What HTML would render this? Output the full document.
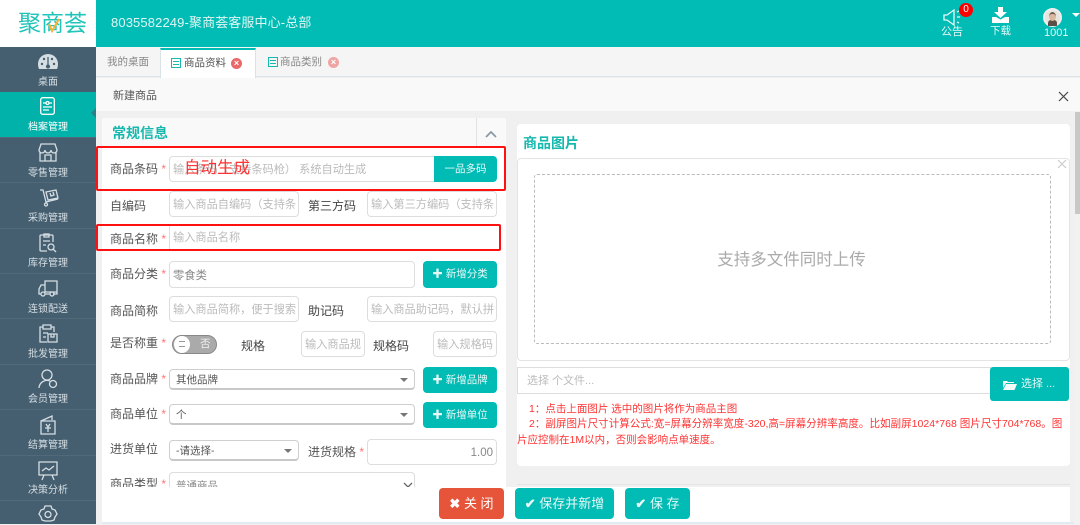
<!DOCTYPE html>
<html><head><meta charset="utf-8">
<style>
*{box-sizing:border-box;margin:0;padding:0}
html,body{width:1080px;height:524px;overflow:hidden;background:#f0f0f0;font-family:"Liberation Sans","Noto Sans CJK SC",sans-serif;font-size:11px;color:#555}
.a{position:absolute;white-space:nowrap}
.top{left:96px;top:0;width:984px;height:47px;background:#00bcb4}
.navt{left:0;width:96px;text-align:center;color:#d5dee3;font-size:10px;line-height:12px}
.lab{font-size:12px;color:#555;line-height:14px}
.s{color:#f77}
.inp{background:#fff;border:1px solid #ddd;border-radius:4px;color:#bbb;font-size:11.2px;line-height:27px;padding-left:3px;overflow:hidden}
.sel{background:#fff;border:1px solid #cfcfcf;border-bottom:2px solid #c8c8c8;border-radius:4px;color:#555;font-size:10.5px;line-height:20px;padding-left:6px}
.sel i{position:absolute;right:6px;top:8px;border:4px solid transparent;border-top:4px solid #777;border-bottom:0}
.btn{background:#00bcb4;border-radius:4px;font-size:11px;text-align:center;color:#e8f8f7}
.tic{width:10px;height:10px;border:1px solid #17b9ae;background:linear-gradient(#17b9ae,#17b9ae) 1px 2px/6px 1px no-repeat,linear-gradient(#17b9ae,#17b9ae) 1px 5px/6px 1px no-repeat}
svg{position:absolute;overflow:visible;fill:none;stroke:#d5dee3;stroke-width:1.3}
</style></head><body>
<div class="a" style="left:0;top:0;width:96px;height:47px;background:#fff"></div>
<div class="a" style="left:18px;top:8px;font-size:23px;line-height:30px;color:#20c4b8;letter-spacing:0">聚商荟</div>
<svg style="left:47px;top:18px" width="16" height="15" viewBox="0 0 16 15"><path d="M2 6l3 7 7-12" stroke="#f8b23a" stroke-width="2"/></svg>
<div class="a top"></div>
<div class="a" style="left:111px;top:14px;font-size:13px;line-height:18px;color:#dff6f4;letter-spacing:.12px">8035582249-聚商荟客服中心-总部</div>

<svg style="left:943px;top:9px" width="18" height="17" viewBox="0 0 18 17"><path d="M1 6h3l7-5v15l-7-5H1z" stroke="#e8f8f7"/><path d="M14 3l2-1M14 8h3M14 13l2 1" stroke="#e8f8f7"/></svg>
<div class="a" style="left:959px;top:3px;width:14px;height:14px;background:#f00;border-radius:50%;color:#fff;font-size:10px;line-height:14px;text-align:center">0</div>
<div class="a" style="left:941px;top:26px;font-size:11px;line-height:13px;color:#e8f8f7">公告</div>
<svg style="left:992px;top:7px" width="17" height="16" viewBox="0 0 17 16"><path d="M6 0h5v5h4L8.500 11 2 5h4z" fill="#fff" stroke="none"/><path d="M0 10h4l4.500 2.500L13 10h4v6H0z" fill="#fff" stroke="none"/></svg>
<div class="a" style="left:990px;top:25px;font-size:10.5px;line-height:13px;color:#e8f8f7">下载</div>
<div class="a" style="left:1043px;top:8px;width:19px;height:19px;border-radius:50%;background:#e8e4e0;border:2px solid #eee"></div>
<div class="a" style="left:1048px;top:20px;width:9px;height:6px;border-radius:3px 3px 0 0;background:#5a5048"></div>
<div class="a" style="left:1049px;top:12px;width:7px;height:9px;border-radius:50%;background:#d9b8a0;border-top:2px solid #6b5a4c"></div>
<div class="a" style="left:1044px;top:27px;font-size:11px;line-height:13px;color:#e8f8f7">1001</div>
<div class="a" style="left:1072px;top:13px;border:4px solid transparent;border-top:4px solid #fff;border-bottom:0"></div>

<!-- tabs -->
<div class="a" style="left:96px;top:47px;width:984px;height:30px;background:#f5f5f5;border-bottom:1px solid #d9e3e6"></div>
<div class="a" style="left:107px;top:55px;color:#888;font-size:10.5px;line-height:14px">我的桌面</div>
<div class="a" style="left:160px;top:48px;width:96px;height:30px;background:#fff;border-top:2px solid #00bcb4;border-left:1px solid #d9e3e6;border-right:1px solid #d9e3e6"></div>
<div class="a tic" style="left:171px;top:58px"></div>
<div class="a" style="left:184px;top:56px;color:#555;font-size:10.5px;line-height:14px">商品资料</div>
<div class="a" style="left:231px;top:58px;width:11px;height:11px;border-radius:50%;background:#e9686a;color:#fff;font-size:9px;line-height:11px;text-align:center;font-weight:bold">×</div>
<div class="a tic" style="left:268px;top:57px"></div>
<div class="a" style="left:280px;top:55px;color:#888;font-size:10.5px;line-height:14px">商品类别</div>
<div class="a" style="left:328px;top:57px;width:11px;height:11px;border-radius:50%;background:#f0a5a5;color:#fff;font-size:9px;line-height:11px;text-align:center;font-weight:bold">×</div>

<!-- title bar -->
<div class="a" style="left:96px;top:78px;width:984px;height:33px;background:#f9f9f9"></div>
<div class="a" style="left:113px;top:89px;color:#555;line-height:14px">新建商品</div>
<svg style="left:1059px;top:92px" width="9" height="9" viewBox="0 0 9 9"><path d="M0 0l9 9M9 0L0 9" stroke="#444" stroke-width="1.2"/></svg>

<!-- left panel -->
<div class="a" style="left:102px;top:118px;width:404px;height:406px;background:#fff;border-radius:3px"></div>
<div class="a" style="left:102px;top:118px;width:404px;height:28px;background:#f9f9f9"></div>
<div class="a" style="left:476px;top:118px;width:1px;height:28px;background:#e2e2e2"></div>
<svg style="left:486px;top:131px" width="10" height="6" viewBox="0 0 10 6"><path d="M0 6l5-5 5 5" stroke="#8a98a3" stroke-width="1.7"/></svg>
<div class="a" style="left:112px;top:124px;font-size:14px;font-weight:bold;line-height:18px;color:#17b9ae">常规信息</div>

<div class="a lab" style="left:110px;top:162px">商品条码 <span class="s">*</span></div>
<div class="a inp" style="left:169px;top:156px;width:266px;height:26px;border-radius:4px 0 0 4px">输入条码（支持条码枪） 系统自动生成</div>
<div class="a btn" style="left:434px;top:156px;width:63px;height:26px;line-height:27px;border-radius:0 4px 4px 0;font-size:10.5px">一品多码</div>
<div class="a" style="left:184px;top:157px;font-size:16.5px;line-height:22px;color:#f33">自动生成</div>
<div class="a" style="left:96px;top:146px;width:410px;height:45px;border:2px solid #f11;border-radius:2px"></div>

<div class="a lab" style="left:110px;top:199px">自编码</div>
<div class="a inp" style="left:169px;top:191px;width:130px;height:26px">输入商品自编码（支持条</div>
<div class="a lab" style="left:308px;top:199px;color:#444">第三方码</div>
<div class="a inp" style="left:367px;top:191px;width:130px;height:26px">输入第三方编码（支持条</div>

<div class="a lab" style="left:110px;top:232px">商品名称 <span class="s">*</span></div>
<div class="a" style="left:169px;top:225px;width:1px;height:26px;background:#ddd"></div>
<div class="a" style="left:173px;top:231px;color:#bbb;font-size:11.2px;line-height:14px">输入商品名称</div>
<div class="a" style="left:96px;top:224px;width:405px;height:27px;border:2px solid #f11;border-radius:2px"></div>

<div class="a lab" style="left:110px;top:267px">商品分类 <span class="s">*</span></div>
<div class="a inp" style="left:169px;top:261px;width:246px;height:27px;color:#888;font-size:11.3px;line-height:28px;padding-top:0">零食类</div>
<div class="a btn" style="left:423px;top:261px;width:74px;height:27px;line-height:27px;font-size:10.5px"><b>✚</b> 新增分类</div>

<div class="a lab" style="left:110px;top:304px">商品简称</div>
<div class="a inp" style="left:169px;top:296px;width:130px;height:26px">输入商品简称，便于搜索</div>
<div class="a lab" style="left:308px;top:304px;color:#444">助记码</div>
<div class="a inp" style="left:367px;top:296px;width:130px;height:26px">输入商品助记码，默认拼</div>

<div class="a lab" style="left:110px;top:336px">是否称重 <span class="s">*</span></div>
<div class="a" style="left:172px;top:335px;width:45px;height:19px;border-radius:10px;background:#aaa;border:1px solid #888"></div>
<div class="a" style="left:174px;top:336px;width:16px;height:17px;border-radius:50%;background:#fff"></div>
<div class="a" style="left:179px;top:341px;width:6px;height:6px;border-top:1px solid #999;border-bottom:1px solid #999"></div>
<div class="a" style="left:200px;top:337px;font-size:10.5px;line-height:14px;color:#f0f0f0">否</div>
<div class="a lab" style="left:241px;top:339px;color:#444">规格</div>
<div class="a inp" style="left:301px;top:331px;width:64px;height:26px">输入商品规</div>
<div class="a lab" style="left:373px;top:339px;color:#444">规格码</div>
<div class="a inp" style="left:433px;top:331px;width:64px;height:26px">输入规格码</div>

<div class="a lab" style="left:110px;top:372px">商品品牌 <span class="s">*</span></div>
<div class="a sel" style="left:169px;top:369px;width:246px;height:21px">其他品牌<i></i></div>
<div class="a btn" style="left:423px;top:367px;width:74px;height:26px;line-height:26px;font-size:10.5px"><b>✚</b> 新增品牌</div>

<div class="a lab" style="left:110px;top:407px">商品单位 <span class="s">*</span></div>
<div class="a sel" style="left:169px;top:404px;width:246px;height:21px">个<i></i></div>
<div class="a btn" style="left:423px;top:402px;width:74px;height:26px;line-height:26px;font-size:10.5px"><b>✚</b> 新增单位</div>

<div class="a lab" style="left:110px;top:442px">进货单位</div>
<div class="a sel" style="left:169px;top:440px;width:130px;height:21px">-请选择-<i></i></div>
<div class="a lab" style="left:308px;top:445px">进货规格 <span class="s">*</span></div>
<div class="a inp" style="left:367px;top:439px;width:130px;height:26px;text-align:right;padding-right:3px;color:#888;font-size:11.5px">1.00</div>

<div class="a lab" style="left:110px;top:477px">商品类型 <span class="s">*</span></div>
<div class="a inp" style="left:169px;top:472px;width:246px;height:26px;color:#888;padding-left:6px;font-size:10.5px">普通商品</div>
<svg style="left:404px;top:483px" width="8" height="5" viewBox="0 0 8 5"><path d="M0 0l4 4 4-4" stroke="#666" stroke-width="1.3"/></svg>

<!-- right panel -->
<div class="a" style="left:517px;top:124px;width:553px;height:342px;background:#fff;border-radius:4px"></div>
<div class="a" style="left:523px;top:134px;font-size:14px;font-weight:bold;line-height:18px;color:#17b9ae">商品图片</div>
<div class="a" style="left:517px;top:158px;width:553px;height:203px;border:1px solid #e4e4e4;border-radius:4px;background:#fff"></div>
<svg style="left:1058px;top:160px" width="8" height="8" viewBox="0 0 8 8"><path d="M0 0l8 8M8 0L0 8" stroke="#ccc" stroke-width="1.2"/></svg>
<div class="a" style="left:534px;top:174px;width:517px;height:170px;border:1px dashed #bbb;border-radius:3px"></div>
<div class="a" style="left:534px;top:249px;width:515px;text-align:center;font-size:16.5px;line-height:22px;color:#aaa">支持多文件同时上传</div>

<div class="a" style="left:517px;top:367px;width:474px;height:27px;border:1px solid #ddd;border-right:0;background:#fff;color:#bbb;font-size:11px;line-height:26px;padding-left:9px">选择 个文件...</div>
<div class="a btn" style="left:990px;top:367px;width:79px;height:34px;border-radius:3px"></div>
<svg style="left:1003px;top:379px" width="14" height="11" viewBox="0 0 14 11"><path d="M0 2h4l1 1h6v1H3L0 9zM3 5h11l-2.500 6H0z" fill="#f2fbfa" stroke="none"/></svg>
<div class="a" style="left:1021px;top:377px;font-size:11px;line-height:14px;color:#e8f8f7">选择 ...</div>
<div class="a" style="left:529px;top:402px;font-size:10.5px;line-height:14px;color:#f33">1：点击上面图片 选中的图片将作为商品主图</div>
<div class="a" style="left:529px;top:417px;font-size:10.55px;line-height:14px;color:#f33">2：副屏图片尺寸计算公式:宽=屏幕分辨率宽度-320,高=屏幕分辨率高度。比如副屏1024*768 图片尺寸704*768。图</div>
<div class="a" style="left:517px;top:433px;font-size:10.5px;line-height:14px;color:#f33">片应控制在1M以内，否则会影响点单速度。</div>
<div class="a" style="left:517px;top:484px;width:553px;height:1px;background:#e4e4e4"></div>

<!-- bottom bar -->
<div class="a" style="left:102px;top:487px;width:968px;height:37px;background:#fff"></div>
<div class="a" style="left:102px;top:522px;width:978px;height:2px;background:#e3ebf0"></div>
<div class="a btn" style="left:439px;top:488px;width:65px;height:31px;line-height:31px;background:#e6553a;color:#fff;font-size:13px"><b>✖</b> 关 闭</div>
<div class="a btn" style="left:515px;top:488px;width:99px;height:31px;line-height:31px;font-size:13px"><b>✔</b> 保存并新增</div>
<div class="a btn" style="left:625px;top:488px;width:65px;height:31px;line-height:31px;font-size:13px"><b>✔</b> 保 存</div>

<!-- scrollbar -->
<div class="a" style="left:1074px;top:111px;width:6px;height:413px;background:#f1f1f1"></div>
<div class="a" style="left:1075px;top:112px;width:5px;height:102px;background:#c8c8c8"></div>

<!-- sidebar -->
<div class="a" style="left:0;top:47px;width:96px;height:477px;background:#465f70"></div>
<div class="a" style="left:0;top:92px;width:96px;height:45px;background:#00b2a9"></div>
<div class="a" style="left:91px;top:108px;border:5px solid transparent;border-right:5px solid #465f70;border-left:0;opacity:.6"></div>
<div class="a" style="left:0;top:137px;width:96px;height:1px;background:#506a7b"></div>
<div class="a" style="left:0;top:182px;width:96px;height:1px;background:#506a7b"></div>
<div class="a" style="left:0;top:228px;width:96px;height:1px;background:#506a7b"></div>
<div class="a" style="left:0;top:273px;width:96px;height:1px;background:#506a7b"></div>
<div class="a" style="left:0;top:318px;width:96px;height:1px;background:#506a7b"></div>
<div class="a" style="left:0;top:364px;width:96px;height:1px;background:#506a7b"></div>
<div class="a" style="left:0;top:409px;width:96px;height:1px;background:#506a7b"></div>
<div class="a" style="left:0;top:455px;width:96px;height:1px;background:#506a7b"></div>
<div class="a" style="left:0;top:500px;width:96px;height:1px;background:#506a7b"></div>

<svg style="left:38px;top:54px" width="20" height="15" viewBox="0 0 20 15"><path d="M1 15A10 10 0 0 1 0 10a10 10 0 0 1 20 0q0 3-1 5z" fill="#d5dee3" stroke="none"/><g fill="#465f70" stroke="none"><circle cx="4" cy="10" r="1.200"/><circle cx="6" cy="5" r="1.200"/><circle cx="16" cy="10" r="1.200"/><circle cx="14" cy="5" r="1.200"/><circle cx="10" cy="12.500" r="2"/></g><path d="M10 3v9" stroke="#465f70" stroke-width="1.300"/></svg>
<div class="a navt" style="top:75px;margin-top:0;transform:translateY(0)"></div>
<div class="a navt" style="top:77px">桌面</div>
<svg style="left:40px;top:97px" width="15" height="18" viewBox="0 0 15 18"><rect x=".7" y=".7" width="13.600" height="16.600" rx="2" stroke="#fff"/><path d="M3 6h3M9 6h3M3 10h9M3 13h6" stroke="#fff"/><circle cx="7.500" cy="6" r="1.500" stroke="#fff"/></svg>
<div class="a navt" style="top:122px;color:#fff">档案管理</div>
<svg style="left:38px;top:143px" width="20" height="19" viewBox="0 0 20 19"><path d="M3 1h14l2 6a3 3 0 0 1-6 0 3 3 0 0 1-6 0 3 3 0 0 1-6 0zM2 9v9h16V9M7 18v-6h6v6"/></svg>
<div class="a navt" style="top:168px">零售管理</div>
<svg style="left:40px;top:189px" width="19" height="18" viewBox="0 0 19 18"><path d="M0 1h3l3 12 12-3M6 3l10-2 2 8-10 2z"/><path d="M10 4l1 3 3-1-1-3"/><circle cx="6" cy="15.500" r="1.500"/></svg>
<div class="a navt" style="top:213px">采购管理</div>
<svg style="left:39px;top:233px" width="19" height="20" viewBox="0 0 19 20"><path d="M8 18H2a1 1 0 0 1-1-1V3a1 1 0 0 1 1-1h11a1 1 0 0 1 1 1v6M5 1h5v3H5zM4 8h7M4 12h3"/><circle cx="12" cy="14" r="3"/><path d="M14 16l3 3"/></svg>
<div class="a navt" style="top:258px">库存管理</div>
<svg style="left:38px;top:280px" width="20" height="17" viewBox="0 0 20 17"><path d="M7 1h12v11H7zM7 5H3L1 9v5h2M7 14h5M15 14h4V12"/><circle cx="5" cy="14" r="2"/><circle cx="14" cy="14" r="2"/></svg>
<div class="a navt" style="top:304px">连锁配送</div>
<svg style="left:38px;top:324px" width="20" height="19" viewBox="0 0 20 19"><path d="M9 18H2V3h3M13 3h3v5M5 1h8v4H5zM5 9h5M5 13h3M10 10h9v8h-9zM13 10v3h3v-3"/></svg>
<div class="a navt" style="top:349px">批发管理</div>
<svg style="left:38px;top:369px" width="20" height="20" viewBox="0 0 20 20"><circle cx="9" cy="6" r="5"/><path d="M1 19a8 8 0 0 1 11-7"/><circle cx="15" cy="15" r="3.500"/></svg>
<div class="a navt" style="top:394px">会员管理</div>
<svg style="left:40px;top:415px" width="16" height="20" viewBox="0 0 16 20"><path d="M1 6l11-5v4M1 6h14v13H1z"/><path d="M6 9l2 3 2-3M5 13h6M8 12v5"/></svg>
<div class="a navt" style="top:440px">结算管理</div>
<svg style="left:38px;top:460px" width="20" height="20" viewBox="0 0 20 20"><path d="M1 2h18v13H1zM4 11l4-3 3 2 5-4M6 15l-2 5M14 15l2 5"/></svg>
<div class="a navt" style="top:485px">决策分析</div>
<svg style="left:38px;top:505px" width="20" height="20" viewBox="0 0 20 20"><path d="M7 1h6l1 3 3 1 2 4-2 3-1 3-3 1-6 0-3-1-1-3-2-3 2-4 3-1z"/><circle cx="10" cy="9.500" r="3"/></svg>
</body></html>
